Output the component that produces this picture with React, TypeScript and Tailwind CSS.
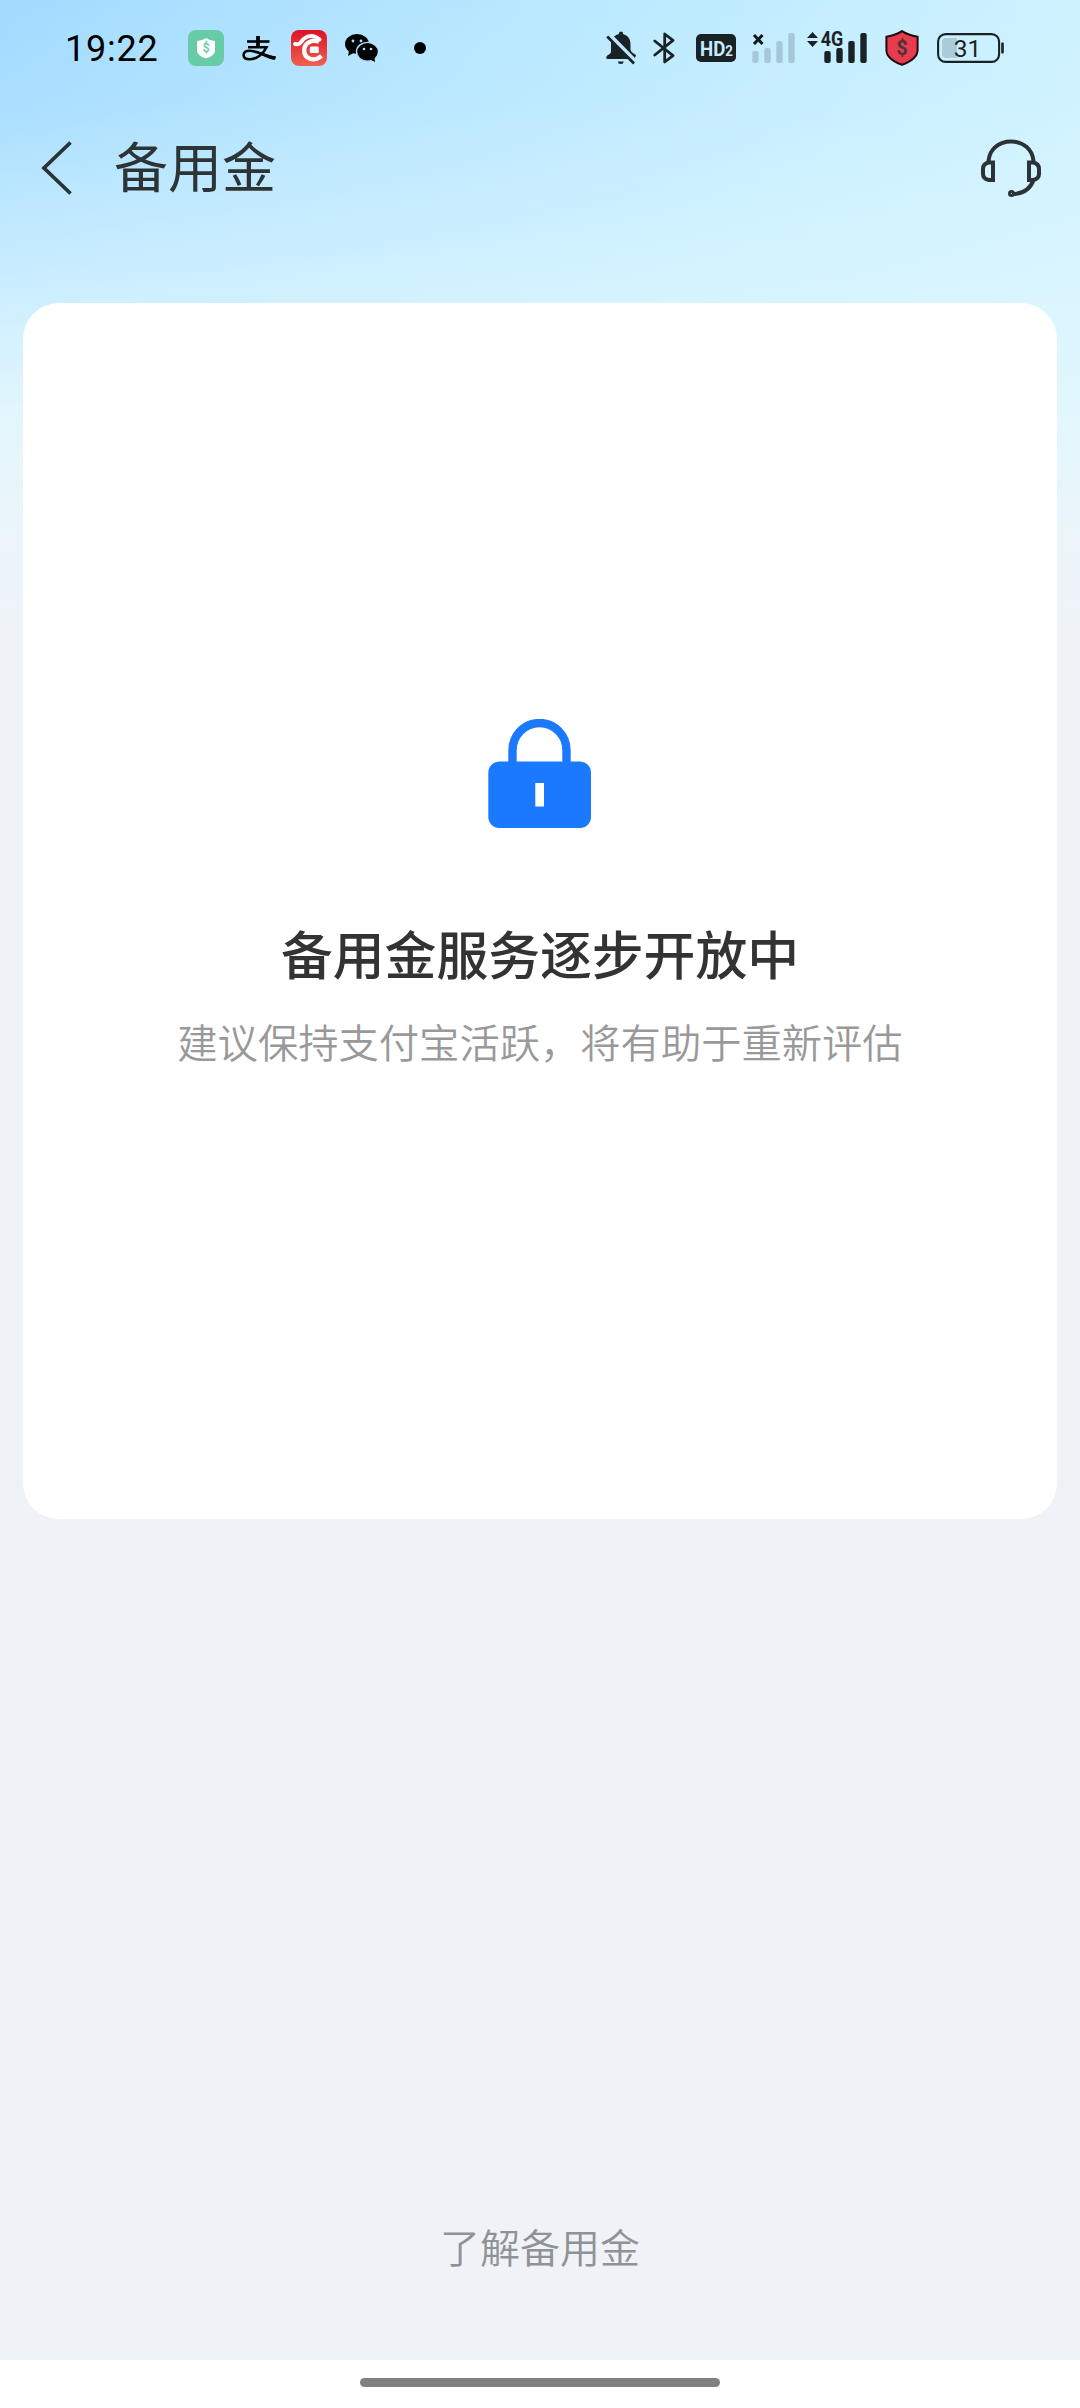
import React from "react";

const Time = () => (
  <span className="mt-[2px] ml-[65px] w-[93px] font-[Roboto,sans-serif] text-[36px] leading-none font-[450] tracking-[0.8px] text-black">
    19:22
  </span>
);

const ShieldAppIcon = () => (
  <svg width="36" height="36" viewBox="0 0 36 36" className="ml-[30px]">
    <rect width="36" height="36" rx="8" fill="#66cba6" />
    <path d="M18 8 Q22 10.8 27 11 V20.5 Q27 25.5 18 28.5 Q9 25.5 9 20.5 V11 Q14 10.8 18 8Z" fill="#fff" />
    <text x="18" y="22" textAnchor="middle" fontSize="12" fontFamily="Roboto, sans-serif" fill="#66cba6" stroke="#66cba6" strokeWidth="0.4">
      $
    </text>
  </svg>
);

const AlipayIcon = () => (
  <svg width="34" height="28" viewBox="0 0 34 28" className="ml-[18px]" fill="none" stroke="#000">
    <path d="M5 7.5H27.5" strokeWidth="2.6" />
    <path d="M16 2V13.5" strokeWidth="3.8" />
    <path d="M6 13.3H24.5C22 19 15 25.3 7.5 25.3C3.5 25.3 1.6 23.4 1.6 21C1.6 18.4 4 16.7 7.3 16.7C14 16.7 22 21.5 33.5 24" strokeWidth="2.6" />
    <path d="M20 18.4C24 20.2 28.5 21.5 34 22.6L32.5 26C26.5 24.7 22 22.5 18 20.4Z" fill="#000" stroke="none" />
  </svg>
);

const RedAppIcon = () => (
  <svg width="36" height="36" viewBox="0 0 36 36" className="ml-[15px]">
    <defs>
      <linearGradient id="red" x1="0" y1="0" x2="0" y2="1">
        <stop offset="0" stopColor="#dd1127" />
        <stop offset="1" stopColor="#f0614f" />
      </linearGradient>
    </defs>
    <rect width="36" height="36" rx="8" fill="url(#red)" />
    <path d="M4 14C9.500 15.500 9.500 11.500 13 8.700C18 4.800 23.500 5.500 28.500 9.500" fill="none" stroke="#fff" strokeWidth="4" strokeLinecap="round" />
    <path d="M28 11.800C22 9.300 13.500 12 13.200 20C13 29 23 32.500 30.500 25.800" fill="none" stroke="#fff" strokeWidth="4.300" />
    <rect x="18.800" y="16.500" width="9" height="6.500" rx="1.500" fill="#fff" />
  </svg>
);

const WechatIcon = () => (
  <svg width="34" height="30" viewBox="0 0 34 30" className="ml-[18px]">
    <ellipse cx="12" cy="11" rx="12" ry="10" fill="#000" />
    <path d="M4 16L3.2 23L10 19Z" fill="#000" />
    <ellipse cx="22.5" cy="18.8" rx="11" ry="9.4" fill="#000" stroke="#ade2ff" strokeWidth="1.4" />
    <path d="M24 26L30 29L29.3 23Z" fill="#000" />
    <g fill="#ade2ff">
      <circle cx="8" cy="8" r="1.4" />
      <circle cx="16" cy="8" r="1.4" />
      <circle cx="19" cy="16" r="1.3" />
      <circle cx="26" cy="16" r="1.3" />
    </g>
  </svg>
);

const MuteBellIcon = () => (
  <svg width="32" height="34" viewBox="0 0 32 34" fill="#1b2226">
    <path d="M11 4.2Q12.3 3.2 14 2.9V2Q14 .4 16 .4Q18 .4 18 2V2.9Q25.5 5 25.5 12.5V18.5Q25.5 21 31 24L30 27L9 5.5Z" />
    <path d="M6 10.5L23.5 28H2.2Q1 28 1.2 26.3Q1.4 24.6 5 22.8Q6 22 6 20Z" />
    <path d="M4 4L31 31" stroke="#bce9ff" strokeWidth="2.2" />
    <path d="M2.200 5.500L29 32.500" stroke="#1b2226" strokeWidth="2.7" />
    <path d="M12.8 30.5H18.8Q18.5 33 15.8 33Q13.1 33 12.8 30.5Z" />
  </svg>
);

const BluetoothIcon = () => (
  <svg width="24" height="34" viewBox="0 0 24 34" className="ml-[16px]" fill="none" stroke="#1b2226" strokeWidth="2.8">
    <path d="M1.8 10L20 24.6L11.7 31V3L20 9.4L1.8 24" strokeLinejoin="round" strokeLinecap="round" />
  </svg>
);

const HdBadge = () => (
  <svg width="40" height="28" viewBox="0 0 40 28" className="ml-[19px]">
    <rect width="40" height="28" rx="5" fill="#1b2226" />
    <text x="4" y="22" fill="#c5edff" fontFamily="Roboto, sans-serif" fontWeight="700" fontSize="21" textLength="33" lengthAdjust="spacingAndGlyphs">
      HD<tspan fontSize="15">2</tspan>
    </text>
  </svg>
);

const NoSignal = () => (
  <svg width="44" height="32" viewBox="0 0 44 32" className="ml-[16px]">
    <path d="M2 3L10.5 12M10.5 3L2 12" stroke="#11181c" strokeWidth="3" />
    <g fill="#a5c8d6">
      <rect x="0.3" y="19" width="6.4" height="12" rx="2" />
      <rect x="12.3" y="16" width="6.4" height="15" rx="2" />
      <rect x="24.3" y="9" width="6.4" height="22" rx="2" />
      <rect x="36.3" y="1" width="6.4" height="30" rx="2" />
    </g>
  </svg>
);

const Signal4G = () => (
  <svg width="62" height="46" viewBox="0 -6 62 46" className="ml-[11px]" fill="#1b2226">
    <path d="M5.5 1L11 7H0ZM5.5 16L11 10H0Z" />
    <text x="13.8" y="15" fontSize="19.5" fontFamily="Roboto, sans-serif" fontWeight="700" textLength="22.5" lengthAdjust="spacingAndGlyphs">
      4G
    </text>
    <rect x="17.3" y="20" width="6.4" height="12" rx="2" />
    <rect x="29.3" y="17" width="6.4" height="15" rx="2" />
    <rect x="41.3" y="10" width="6.4" height="22" rx="2" />
    <rect x="53.3" y="2" width="6.4" height="30" rx="2" />
  </svg>
);

const RedShield = () => (
  <svg width="34" height="36" viewBox="0 0 34 36" className="ml-[16px]">
    <path
      d="M17 1.2Q23 5.3 32.6 6.8V20Q32.6 29 17 34.8Q1.4 29 1.4 20V6.8Q11 5.3 17 1.2Z"
      fill="#e83b4e"
      stroke="#1d0d12"
      strokeWidth="2"
    />
    <text x="17" y="25" textAnchor="middle" fontSize="20" fontWeight="700" fontFamily="Roboto, sans-serif" fill="#4b3338">
      $
    </text>
  </svg>
);

const Battery = () => (
  <svg width="68" height="30" viewBox="0 0 68 30" className="ml-[18px]">
    <path d="M9 5H20V25H9Q5 25 5 21V9Q5 5 9 5Z" fill="#a9ccd8" />
    <rect x="1.1" y="1.1" width="61" height="27.8" rx="7.5" fill="none" stroke="#1b2226" strokeWidth="2.1" />
    <rect x="64.2" y="9.5" width="2.6" height="11" rx="1" fill="#1b2226" />
    <text x="30.5" y="23.6" textAnchor="middle" fontSize="24.5" fontFamily="Roboto, sans-serif" fill="#1b2226">
      31
    </text>
  </svg>
);

const StatusBar = () => (
  <div className="flex h-[96px] items-center">
    <Time />
    <ShieldAppIcon />
    <AlipayIcon />
    <RedAppIcon />
    <WechatIcon />
    <span className="ml-[35px] h-3 w-3 rounded-full bg-black" />
    <div className="mr-[75px] ml-auto flex items-center">
      <MuteBellIcon />
      <BluetoothIcon />
      <HdBadge />
      <NoSignal />
      <Signal4G />
      <RedShield />
      <Battery />
    </div>
  </div>
);

const Header = () => (
  <header className="flex h-[144px] items-center pr-[38px] pl-[40px]">
    <svg width="32" height="54" viewBox="0 0 32 54" fill="none" stroke="#2b3336" strokeWidth="3.8">
      <path d="M30.5 1.5L4 27L30.5 52.5" />
    </svg>
    <h1 className="mb-[6px] ml-[42px] text-[54px] leading-none font-normal text-[#2d3436]">备用金</h1>
    <svg width="62" height="60" viewBox="0 0 62 60" className="ml-auto" fill="none" stroke="#2b3336" strokeWidth="4">
      <path d="M8.500 24V23C9.500 11 19 3.500 31 3.500S52.500 11 53.500 23V24" />
      <path d="M13 24.500H9Q3 25.500 3 31V36Q3 41 9 42H13Z" />
      <path d="M49 24.500H53Q59 25.500 59 31V36Q59 41 53 42H49Z" />
      <path d="M53.500 42C50 51.500 42 56 32 56" />
      <circle cx="31.500" cy="55.500" r="1.500" />
    </svg>
  </header>
);

const Lock = () => (
  <svg width="104" height="110" viewBox="0 0 104 110">
    <path d="M24.500 50V31.500A27 27.500 0 0 1 78.500 31.500V50" fill="none" stroke="#1a79ff" strokeWidth="8.400" />
    <rect x="0.300" y="42.500" width="102.700" height="66.500" rx="11" fill="#1a79ff" />
    <rect x="47.300" y="64" width="8.700" height="23.500" fill="#fff" />
  </svg>
);

const App = () => {
  return (
    <div className="flex h-[2408px] w-[1080px] flex-col bg-white font-['Noto_Sans_CJK_SC',sans-serif]">
      <main className="flex flex-1 flex-col bg-[#eff3f8] bg-[linear-gradient(180deg,rgba(224,246,255,0)_0px,rgba(224,246,255,0.1)_100px,rgba(224,247,255,0.75)_320px,rgba(227,247,253,1)_420px,#eaf5fa_520px,#eff3f8_640px),linear-gradient(100deg,#a2dbff_0px,#b4e5ff_400px,#c4eeff_800px,#cff2ff_1100px)]">
        <StatusBar />
        <Header />
        <section className="mx-[23px] mt-[63px] flex h-[1216px] flex-col items-center rounded-[36px] bg-white pt-[416px]">
          <Lock />
          <h2 className="mt-[94px] text-[51.8px] leading-[60px] font-medium text-[#333333]">备用金服务逐步开放中</h2>
          <p className="mt-[30px] text-[40.3px] leading-[56px] font-[350] text-[#999999]">建议保持支付宝活跃，将有助于重新评估</p>
        </section>
        <a className="mt-auto mb-[86px] self-center text-[40px] leading-[56px] font-[350] text-[#8f9297]">了解备用金</a>
      </main>
      {/* Gesture bar */}
      <div className="flex h-[48px] justify-center pt-[18px]">
        <div className="h-[9px] w-[360px] rounded-full bg-[#808080]" />
      </div>
    </div>
  );
};

export default App;
